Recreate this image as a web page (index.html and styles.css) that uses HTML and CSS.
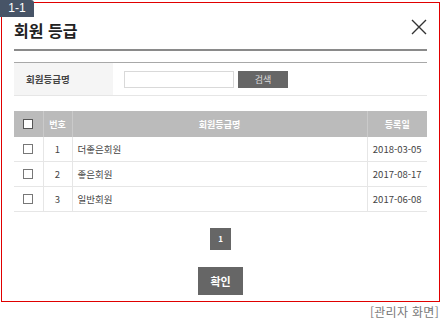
FILE: index.html
```html
<!DOCTYPE html>
<html lang="ko">
<head>
  <meta charset="UTF-8">
  <meta name="viewport" content="width=device-width, initial-scale=1.0">
  <title>회원 등급</title>
  <link rel="stylesheet" href="styles.css">
</head>
<body>
  <div class="page">
    <span class="badge">1-1</span>

    <!-- 회원 등급 팝업 -->
    <div class="frame">
      <div class="modal-head">
        <h2 class="modal-title">회원 등급</h2>
        <button class="close" type="button" aria-label="닫기">
          <svg width="16" height="16" viewBox="0 0 16 16">
            <path d="M1 1 L15 15 M15 1 L1 15" stroke="#333" stroke-width="1.4" fill="none"/>
          </svg>
        </button>
      </div>

      <div class="search">
        <div class="search-label">회원등급명</div>
        <input class="search-input" type="text">
        <button class="search-btn" type="button">검색</button>
      </div>

      <table class="grid">
        <colgroup>
          <col class="col-check">
          <col class="col-no">
          <col class="col-name">
          <col class="col-date">
        </colgroup>
        <thead>
          <tr>
            <th><input class="check check-head" type="checkbox"></th>
            <th>번호</th>
            <th>회원등급명</th>
            <th>등록일</th>
          </tr>
        </thead>
        <tbody>
          <tr>
            <td class="center"><input class="check" type="checkbox"></td>
            <td class="center">1</td>
            <td>더좋은회원</td>
            <td class="center">2018-03-05</td>
          </tr>
          <tr>
            <td class="center"><input class="check" type="checkbox"></td>
            <td class="center">2</td>
            <td>좋은회원</td>
            <td class="center">2017-08-17</td>
          </tr>
          <tr>
            <td class="center"><input class="check" type="checkbox"></td>
            <td class="center">3</td>
            <td>일반회원</td>
            <td class="center">2017-06-08</td>
          </tr>
        </tbody>
      </table>

      <div class="paging">
        <a class="page-num" href="#">1</a>
      </div>

      <div class="actions">
        <button class="ok-btn" type="button">확인</button>
      </div>
    </div>

    <p class="caption">[관리자 화면]</p>
  </div>
</body>
</html>
```

FILE: styles.css
```css
body {
  margin: 0;
  font-family: 'Noto Sans CJK KR', 'Noto Sans', sans-serif;
  color: #333;
  background: #fff;
}
.page {
  position: relative;
  padding: 2px 0 0 1px;
}
.badge {
  position: absolute;
  top: 0;
  left: 0;
  width: 34px;
  height: 17px;
  line-height: 17px;
  background: #475467;
  color: #fff;
  font-family: 'Liberation Sans', sans-serif;
  font-size: 12px;
  text-align: center;
  border-radius: 0 3px 0 0;
}
.frame {
  width: 439px;
  height: 300px;
  box-sizing: border-box;
  border: 1px solid #e00000;
  padding: 0 12px;
}

/* 상단 제목 */
.modal-head {
  display: flex;
  justify-content: space-between;
  align-items: flex-start;
  height: 48px;
  box-sizing: border-box;
  border-bottom: 2px solid #8a8a8a;
}
.modal-title {
  margin: 15px 0 0;
  font-size: 16px;
  line-height: 24px;
  font-weight: bold;
  color: #222;
}
.close {
  margin-top: 16px;
  padding: 0;
  border: 0;
  background: none;
  width: 16px;
  height: 16px;
}
.close svg {
  display: block;
}

/* 검색 */
.search {
  display: flex;
  align-items: center;
  height: 34px;
  box-sizing: border-box;
  margin-top: 11px;
  border-top: 1px solid #a8a8a8;
  border-bottom: 1px solid #e6e6e6;
}
.search-label {
  display: flex;
  align-items: center;
  width: 99px;
  height: 100%;
  box-sizing: border-box;
  padding-left: 12px;
  background: #f5f5f5;
  font-size: 9.5px;
  font-weight: bold;
  color: #444;
}
.search-input {
  width: 110px;
  height: 17px;
  box-sizing: border-box;
  margin: 0 0 0 11px;
  border: 1px solid #d9d9d9;
  padding: 0 4px;
}
.search-btn {
  width: 50px;
  height: 17px;
  margin-left: 4px;
  padding: 0;
  border: 0;
  background: #666;
  color: #ddd;
  font-family: inherit;
  font-size: 9px;
}

/* 목록 */
.grid {
  width: 100%;
  margin-top: 15px;
  border-collapse: collapse;
  font-size: 9.5px;
}
.col-check { width: 29px; }
.col-no { width: 29px; }
.col-date { width: 60px; }
.grid th {
  height: 26px;
  padding: 0;
  background: #bbb;
  color: #fff;
  font-size: 9px;
  font-weight: bold;
  border-left: 1px solid #cacaca;
}
.grid th:first-child,
.grid td:first-child {
  border-left: 0;
}
.grid td {
  height: 24px;
  padding: 0 0 0 5px;
  border-bottom: 1px solid #e6e6e6;
  border-left: 1px solid #e6e6e6;
  color: #444;
}
.grid td.center {
  padding: 0;
  text-align: center;
}
.check {
  appearance: none;
  display: block;
  width: 10px;
  height: 10px;
  margin: 0 auto;
  box-sizing: border-box;
  border: 1px solid #777;
  background: #fff;
}
.check-head {
  border-color: #555;
}

/* 페이지 */
.paging {
  margin-top: 16px;
  text-align: center;
  line-height: 0;
}
.page-num {
  display: inline-block;
  width: 21px;
  height: 22px;
  line-height: 22px;
  background: #666;
  color: #fff;
  font-size: 8px;
  font-weight: bold;
  text-decoration: none;
}
.actions {
  margin-top: 17px;
  text-align: center;
  line-height: 0;
}
.ok-btn {
  width: 45px;
  height: 28px;
  padding: 0;
  border: 0;
  background: #666;
  color: #fff;
  font-family: inherit;
  font-size: 11px;
  font-weight: bold;
}
.caption {
  margin: 2px 3px 0 0;
  text-align: right;
  font-size: 12px;
  line-height: 16px;
  letter-spacing: 0.3px;
  color: #777;
}
```
